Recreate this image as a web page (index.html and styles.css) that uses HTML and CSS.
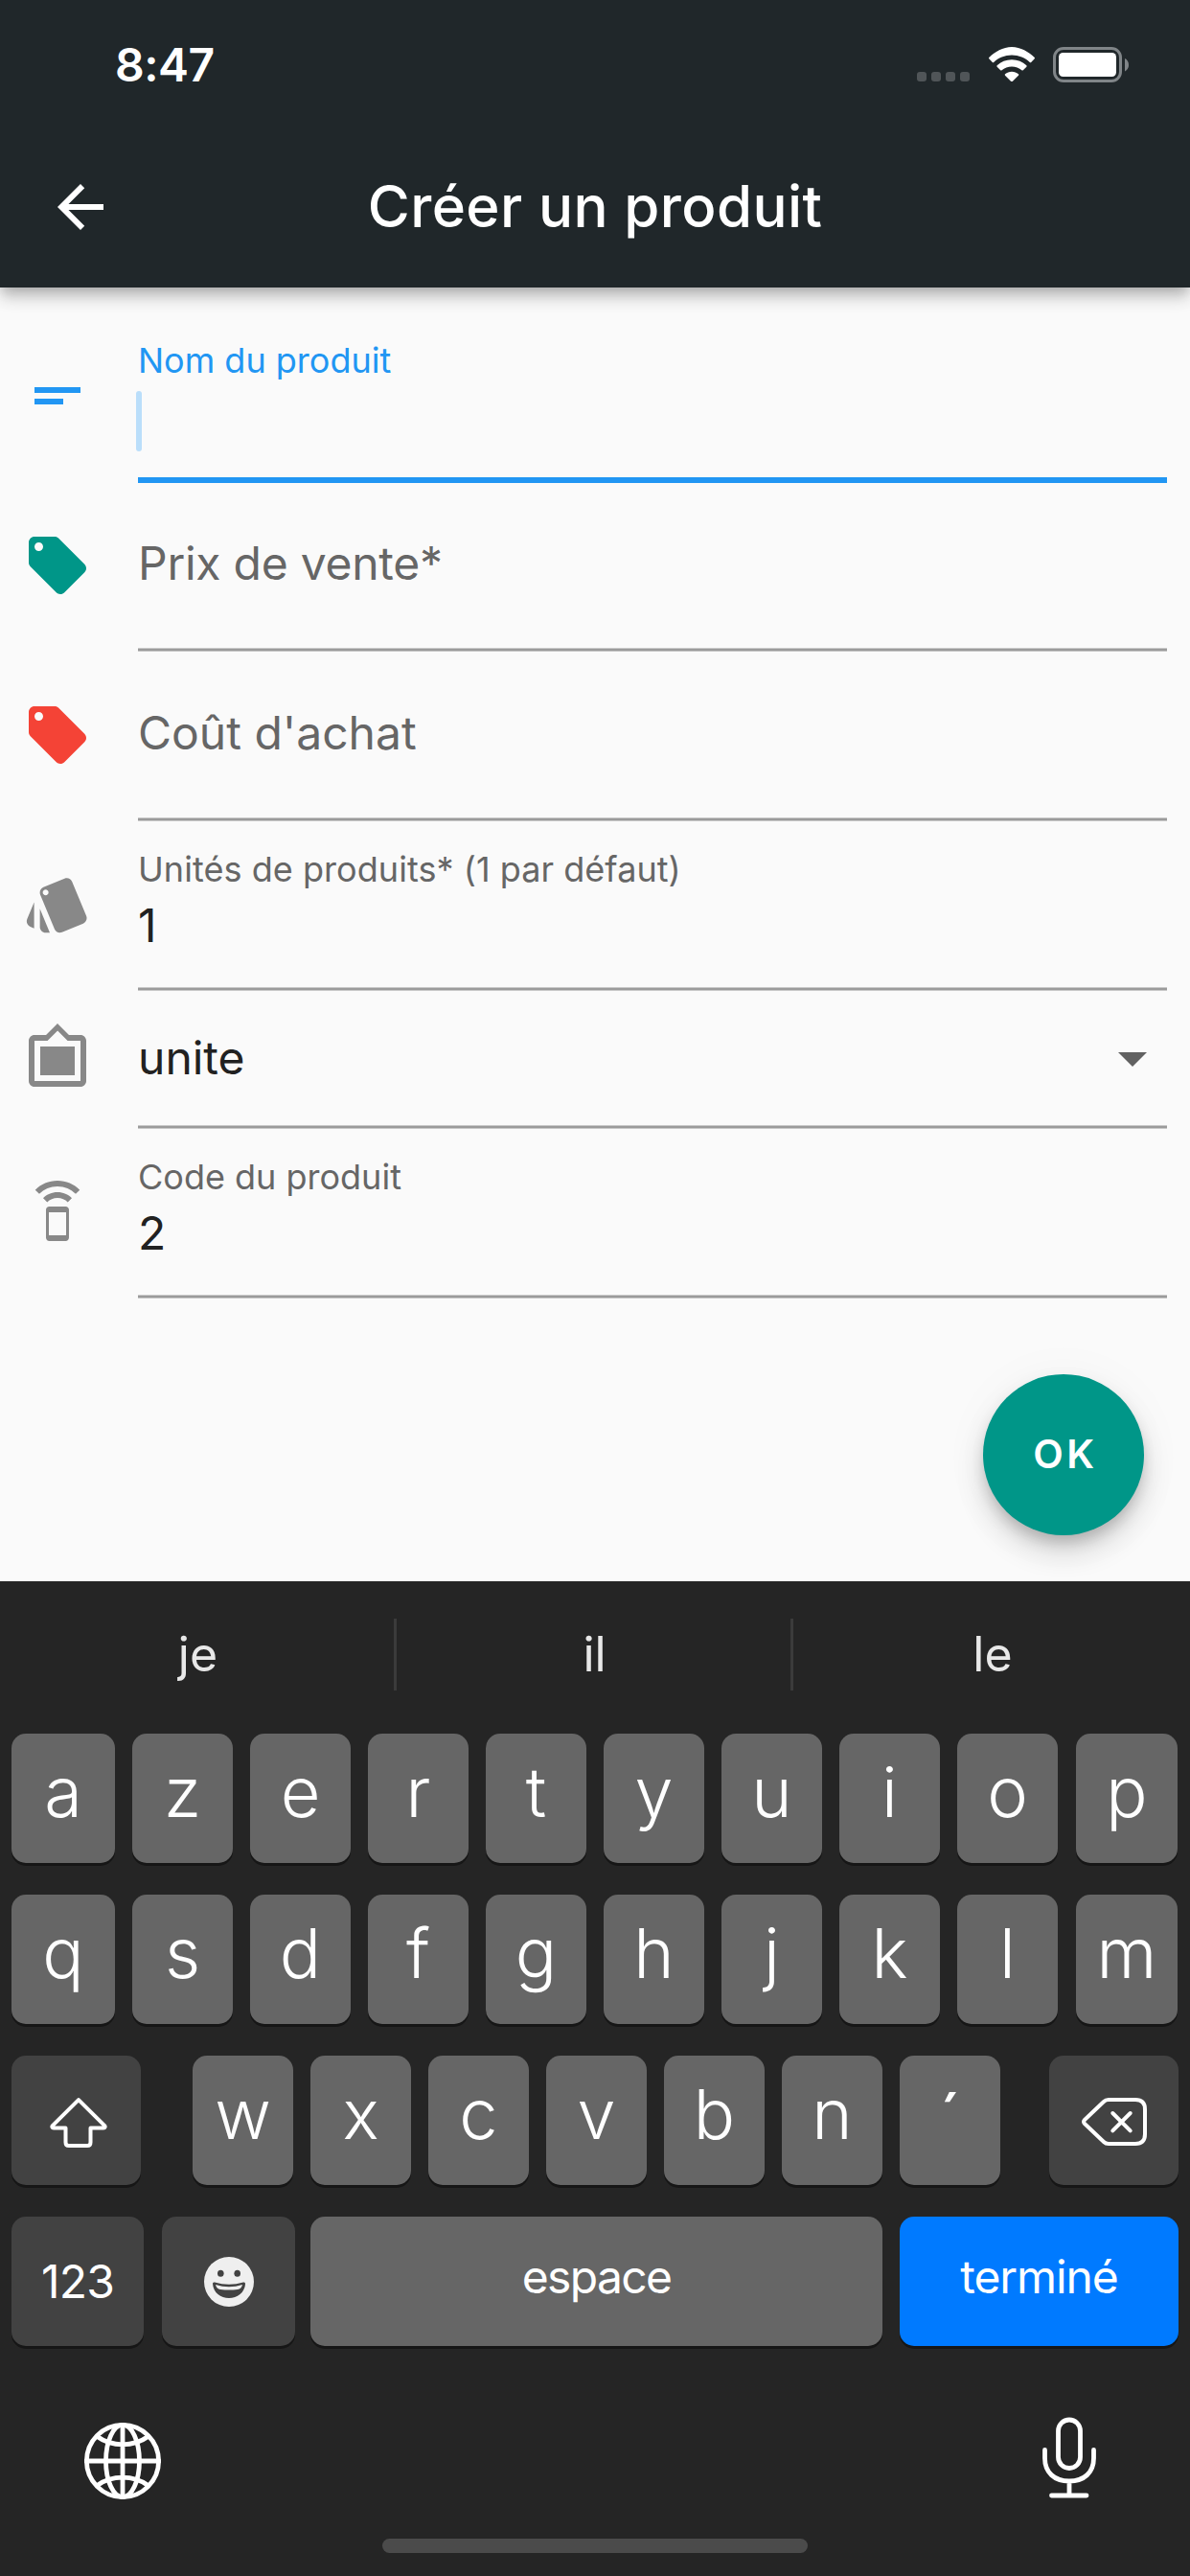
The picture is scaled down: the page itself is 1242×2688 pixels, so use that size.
FILE: index.html
```html
<!DOCTYPE html>
<html lang="fr">
<head>
<meta charset="utf-8">
<title>Créer un produit</title>
<link rel="stylesheet" href="styles.css">
</head>
<body>
<header class="appbar">
  <div class="status">
    <span class="time">8:47</span>
    <div class="status-icons">
      <div class="signal"><i></i><i></i><i></i><i></i></div>
      <svg class="wifi" viewBox="2.3 0 43.4 33" preserveAspectRatio="none"><path d="M24 7.8c6.600 0 12.600 2.600 17 6.800.35.35.9.35 1.250 0l3.200-3.300c.350-.350.350-.950 0-1.300C39.900 4.700 32.400 0 24 0 15.600 0 8.100 4.700 2.550 10c-.35.35-.35.950 0 1.300l3.200 3.300c.35.35.9.35 1.250 0C11.400 10.400 17.400 7.800 24 7.800z"/><path d="M24 18.700c3.600 0 6.900 1.350 9.400 3.550.35.35.900.35 1.250 0l3.250-3.300c.35-.4.350-.950 0-1.300C34.250 14.200 29.400 12.200 24 12.200s-10.250 2-13.900 5.450c-.35.35-.35.900 0 1.300l3.250 3.300c.35.350.900.35 1.250 0 2.500-2.200 5.800-3.550 9.400-3.550z"/><path d="M30.300 27.200c.35-.4.350-.950-.05-1.300-1.700-1.450-3.900-2.300-6.250-2.300s-4.550.85-6.250 2.300c-.4.350-.4.900-.05 1.300l5.650 5.700c.35.35.950.35 1.300 0z"/></svg>
      <svg class="battery" viewBox="0 0 80 37"><rect x="1.500" y="1.500" width="69" height="34" rx="9.500" fill="none" stroke="#808588" stroke-width="3"/><rect x="6" y="6" width="60" height="25" rx="4.500" fill="#fff"/><path d="M75 12v13.500c2.500-1.200 4-3.700 4-6.750s-1.500-5.600-4-6.750z" fill="#808588"/></svg>
    </div>
  </div>
  <div class="toolbar">
    <svg class="icon" viewBox="0 0 24 24"><path d="M20 11H7.830l5.590-5.590L12 4l-8 8 8 8 1.410-1.410L7.830 13H20v-2z"/></svg>
    <h1>Créer un produit</h1>
  </div>
</header>

<main class="form">
  <div class="row focused">
    <svg class="icon" viewBox="0 0 24 24"><path d="M4 9h16v2H4zm0 4h10v2H4z"/></svg>
    <div class="field"><label class="small">Nom du produit</label><span class="cursor"></span></div>
  </div>
  <div class="row sale">
    <svg class="icon" viewBox="0 0 24 24"><path d="M21.410 11.580l-9-9C12.050 2.220 11.550 2 11 2H4c-1.100 0-2 .9-2 2v7c0 .55.220 1.050.590 1.420l9 9c.360.360.860.580 1.410.580.550 0 1.050-.220 1.410-.590l7-7c.370-.360.590-.860.590-1.410 0-.550-.230-1.060-.590-1.420zM5.500 7C4.670 7 4 6.330 4 5.500S4.670 4 5.500 4 7 4.670 7 5.500 6.330 7 5.500 7z"/></svg>
    <div class="field"><label class="big prix">Prix de vente*</label></div>
  </div>
  <div class="row cost">
    <svg class="icon" viewBox="0 0 24 24"><path d="M21.410 11.580l-9-9C12.050 2.220 11.550 2 11 2H4c-1.100 0-2 .9-2 2v7c0 .55.220 1.050.590 1.420l9 9c.360.360.860.580 1.410.580.550 0 1.050-.220 1.410-.590l7-7c.370-.360.590-.860.590-1.410 0-.550-.230-1.060-.590-1.420zM5.500 7C4.670 7 4 6.330 4 5.500S4.670 4 5.500 4 7 4.670 7 5.500 6.330 7 5.500 7z"/></svg>
    <div class="field"><label class="big">Coût d'achat</label></div>
  </div>
  <div class="row">
    <svg class="icon" viewBox="0 0 24 24"><path d="M2.530 19.650l1.340.56v-9.030l-2.430 5.860c-.41 1.020.08 2.190 1.090 2.610zm19.500-3.700L17.070 3.980c-.31-.75-1.040-1.210-1.810-1.230-.26 0-.53.04-.79.15L7.100 5.950c-.75.31-1.210 1.030-1.230 1.800-.01.27.04.54.15.8l4.960 11.970c.31.76 1.050 1.220 1.830 1.230.26 0 .52-.05.77-.15l7.360-3.050c1.020-.42 1.510-1.590 1.090-2.600zM7.880 8.750c-.55 0-1-.45-1-1s.45-1 1-1 1 .45 1 1-.45 1-1 1zm-2 11c0 1.100.9 2 2 2h1.450l-3.450-8.340v6.340z"/></svg>
    <div class="field"><label class="small unites">Unités de produits* (1 par défaut)</label><span class="value">1</span></div>
  </div>
  <div class="row select">
    <svg class="icon" viewBox="0 0 24 24"><path d="M20 4h-4l-4-4-4 4H4c-1.100 0-2 .9-2 2v14c0 1.100.9 2 2 2h16c1.100 0 2-.9 2-2V6c0-1.100-.9-2-2-2zm0 16H4V6h4.520l3.520-3.500L15.520 6H20v14zM18 8H6v10h12"/></svg>
    <div class="field"><span class="value">unite</span><svg class="icon caret" viewBox="0 0 24 24"><path d="M7 10l5 5 5-5z"/></svg></div>
  </div>
  <div class="row">
    <svg class="icon" viewBox="0 0 24 24"><path d="M7 7.070L8.430 8.500c.91-.91 2.180-1.480 3.570-1.480s2.660.57 3.570 1.480L17 7.070C15.720 5.790 13.950 5 12 5s-3.720.79-5 2.070zM12 1C8.980 1 6.240 2.230 4.250 4.210l1.410 1.410C7.280 4 9.530 3 12 3s4.720 1 6.340 2.620l1.410-1.410C17.760 2.230 15.020 1 12 1zm2.860 9.010L9.140 10C8.510 10 8 10.510 8 11.140v9.710c0 .63.51 1.140 1.140 1.140h5.710c.63 0 1.140-.51 1.140-1.140v-9.710c.01-.63-.51-1.130-1.130-1.130zM15 20H9v-8h6v8z"/></svg>
    <div class="field"><label class="small">Code du produit</label><span class="value">2</span></div>
  </div>
  <button class="fab">OK</button>
</main>

<section class="keyboard">
  <div class="suggestions"><span>je</span><span>il</span><span>le</span></div>
  <div class="keys">
    <div class="krow ten"><b>a</b><b>z</b><b>e</b><b>r</b><b>t</b><b>y</b><b>u</b><b>i</b><b>o</b><b>p</b></div>
    <div class="krow ten"><b>q</b><b>s</b><b>d</b><b>f</b><b>g</b><b>h</b><b>j</b><b>k</b><b>l</b><b>m</b></div>
    <div class="krow third">
      <b class="dark"><svg class="shift" viewBox="0 0 60 52"><path d="M30 2.200L57 28.800c1.200 1.300.700 2.700-1 2.700H42.500v15q0 3.500-3.500 3.500H20q-3.500 0-3.500-3.500v-15H4c-1.700 0-2.200-1.400-1-2.700z"/></svg></b>
      <div class="letters"><b>w</b><b>x</b><b>c</b><b>v</b><b>b</b><b>n</b><b class="accent">´</b></div>
      <b class="dark"><svg class="back" viewBox="0 0 68 50"><path d="M28 2h28q10 0 10 10v26q0 10-10 10H28q-3 0-5-2L3 27q-2-2 0-4L23 4q2-2 5-2zM32.300 16l18.400 18.400M50.700 16l-18.400 18.400"/></svg></b>
    </div>
    <div class="krow fourth">
      <b class="dark num">123</b>
      <b class="dark emoji"><svg class="smile" viewBox="0 0 52 52"><circle cx="26" cy="26" r="26" fill="#efefef"/><ellipse cx="17.300" cy="17.300" rx="3.300" ry="3.500" fill="#424242"/><ellipse cx="34.700" cy="17.300" rx="3.300" ry="3.500" fill="#424242"/><path d="M11 26.500q15 4.500 30 0 2-.500 2 1.500C42.500 37.500 34.500 43 26 43S9.500 37.500 9 28q0-2 2-1.500z" fill="#424242"/><path d="M12 29q14 4.500 28 0-1 4.300-5 5-9 1.200-18 0-4-.7-5-5z" fill="#efefef"/></svg></b>
      <b class="word espace">espace</b>
      <b class="word done">terminé</b>
    </div>
  </div>
  <div class="bottom">
    <svg class="globe" viewBox="0 0 80 80"><circle cx="40" cy="40" r="37.600"/><ellipse cx="40" cy="40" rx="17.500" ry="37.600"/><path d="M40 2v76M2 40h76M13.500 14.500q11.500 8.300 26.500 8.300t26.500-8.300M13.500 65.500q11.500-8.300 26.500-8.300t26.500 8.300"/></svg>
    <svg class="mic" viewBox="0 0 56 86"><rect x="16.500" y="3" width="23" height="50.500" rx="11.500"/><path d="M2.500 34.500v8.500c0 15 10 24 25.500 24s25.500-9 25.500-24v-8.500M28 67v15M9.500 82h36.500"/></svg>
  </div>
  <div class="home"></div>
</section>
</body>
</html>
```
FILE: styles.css
```css
* { box-sizing: border-box; }
body { margin: 0; width: 1242px; height: 2688px; display: flex; flex-direction: column; background: #fafafa; font-family: Inter, "Liberation Sans", sans-serif; overflow: hidden; }
svg { display: block; fill: currentColor; flex: none; }
.icon { width: 72px; height: 72px; }

.appbar { height: 300px; background: #20272a; color: #fff; box-shadow: 0 6px 12px -3px rgba(0,0,0,.2), 0 12px 15px rgba(0,0,0,.14), 0 3px 30px rgba(0,0,0,.06); z-index: 1; }
.status { height: 132px; display: flex; justify-content: space-between; padding: 49px 63px 0 120px; }
.time { font-size: 48px; font-weight: 600; line-height: 38px; letter-spacing: -.5px; }
.status-icons { display: flex; align-items: flex-start; height: 37px; }
.signal { display: flex; gap: 5px; padding-top: 26px; margin-right: 20px; }
.signal i { width: 10px; height: 10px; border-radius: 3px; background: #505558; }
.wifi { width: 48px; height: 36px; margin-right: 19px; }
.battery { width: 80px; height: 37px; }
.toolbar { height: 168px; display: grid; grid-template-columns: 72px 1fr 72px; align-items: center; padding: 0 48px; }
h1 { margin: 0; font-size: 60px; font-weight: 500; line-height: 70px; padding-bottom: 2px; text-align: center; white-space: nowrap; letter-spacing: .4px; }

.form { height: 1350px; padding: 27px 24px 0; display: flex; flex-direction: column; color: #888; }
.row { height: 177px; display: flex; gap: 48px; padding-top: 50px; }
.row .field { flex: 1; margin-top: -50px; height: 177px; padding-top: 20px; display: flex; flex-direction: column; color: #212121; background: linear-gradient(#c8c8c8 0 1px, #9b9b9b 1px 3px, #c8c8c8 3px) 0 172px / 100% 4px no-repeat; }
label { color: #666; white-space: nowrap; }
.small { font-size: 36px; line-height: 44px; padding-top: 7px; }
.unites { letter-spacing: .05px; }
.big { font-size: 48px; line-height: 58px; padding-top: 35px; }
.prix { letter-spacing: -.25px; }
.value { font-size: 48px; line-height: 58px; margin-top: 8px; }
.focused, .focused .field, .focused label { color: #2196f3; }
.row.focused .field { background: linear-gradient(#2196f3, #2196f3) 0 100% / 100% 6px no-repeat; }
.cursor { width: 6px; height: 63px; border-radius: 3px; background: #badefa; margin: 10px 0 0 -2px; }
.sale { color: #009688; }
.cost { color: #f44336; }
.row.select { height: 144px; padding-top: 33px; }
.row.select .field { margin-top: -33px; height: 144px; padding-top: 33px; flex-direction: row; justify-content: space-between; background-position: 0 139px; }
.select .value { margin-top: 7px; }
.caret { color: #616161; }
.fab { align-self: flex-end; width: 168px; height: 168px; margin: 78px 24px 0 0; border: 0; padding: 0 0 2px 4px; border-radius: 50%; background: #009688; color: #fff; font: 600 41px/50px Inter, sans-serif; letter-spacing: 3.700px; box-shadow: 0 9px 15px -3px rgba(0,0,0,.2), 0 18px 30px rgba(0,0,0,.14), 0 3px 54px rgba(0,0,0,.04); }

.keyboard { position: relative; z-index: 2; height: 1038px; background: #252525; color: #fff; }
.suggestions { height: 159px; display: grid; grid-template-columns: 411px 414px 417px; padding-top: 39px; }
.suggestions span { height: 75px; font-size: 50px; line-height: 74px; text-align: center; color: #e8e8e8; padding-left: 2px; }
.suggestions span + span { background: linear-gradient(#3b3b3b, #3b3b3b) 0 0 / 3px 100% no-repeat; padding-left: 5px; }
.keys { display: flex; flex-direction: column; gap: 33px; padding: 0 12px; }
.krow, .letters { display: flex; gap: 18px; height: 135px; }
b { flex: none; width: 105px; height: 135px; border-radius: 15px; background: #666; box-shadow: 0 3px 0 #161616; font-weight: 350; font-size: 72px; line-height: 122px; text-align: center; }
.ten b:first-child { width: 108px; }
.ten b:last-child { width: 106px; margin-left: 1px; }
.third { justify-content: space-between; }
.letters { margin-left: 3px; }
.accent { line-height: 134px; font-weight: 400; }
.dark { background: #424242; width: 135px; display: flex; align-items: center; justify-content: center; }
.krow.fourth { gap: 0; }
.num { width: 138px; font-size: 48px; font-weight: 400; line-height: 134px; letter-spacing: -.8px; }
.emoji { width: 139px; margin-left: 19px; }
.word { font-size: 48px; font-weight: 400; line-height: 126px; }
.espace { width: 597px; margin-left: 16px; letter-spacing: -1.700px; }
.done { width: 291px; margin-left: 18px; background: #007aff; letter-spacing: -1.100px; }
.shift { width: 60px; height: 52px; fill: none; stroke: #fff; stroke-width: 4; stroke-linejoin: round; margin: 4px 0 0 4px; }
.back { width: 68px; height: 50px; fill: none; stroke: #fff; stroke-width: 4; stroke-linecap: round; stroke-linejoin: round; margin: 3px 0 0 1px; }
.smile { width: 52px; height: 52px; }
.bottom { display: flex; justify-content: space-between; padding: 74px 98px 0 88px; height: 201px; }
.globe, .mic { fill: none; stroke: #fff; stroke-width: 4.800; stroke-linecap: round; }
.globe { width: 80px; height: 80px; margin-top: 6px; }
.mic { width: 56px; height: 86px; }
.home { width: 444px; height: 15px; border-radius: 8px; background: #4b4b4b; margin: 0 auto; }
```
